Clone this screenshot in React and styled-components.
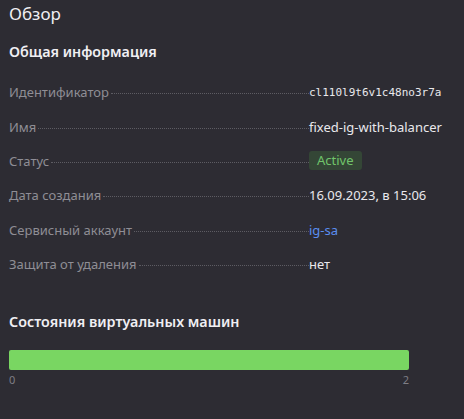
import React from 'react';
import styled, { createGlobalStyle } from 'styled-components';

const Global = createGlobalStyle`
  html, body {
    margin: 0;
    padding: 0;
    background: #2d2c33;
  }
  body {
    font-family: 'Noto Sans', 'Open Sans', sans-serif;
    color: #e9e8ec;
  }
`;

const Page = styled.div`
  width: 464px;
  height: 419px;
  box-sizing: border-box;
  padding: 3px 9px 0 9px;
  background: #2d2c33;
  overflow: hidden;
`;

const PageTitle = styled.h1`
  margin: 0;
  font-size: 17px;
  font-weight: 400;
  line-height: 22px;
  color: #f0eff3;
`;

const SectionTitle = styled.h2`
  margin: ${({ $top }) => $top}px 0 0;
  font-size: 14.3px;
  font-weight: 600;
  line-height: 20px;
  color: #f0eff3;
`;

const List = styled.div`
  display: flex;
  flex-direction: column;
  margin-top: 13px;
  width: 430px;
`;

const Row = styled.div`
  display: grid;
  grid-template-columns: 300px 1fr;
  align-items: center;
  height: 34.4px;
`;

const LabelCell = styled.div`
  display: flex;
  align-items: baseline;
  font-size: 13px;
  color: #8f8e95;
  white-space: nowrap;
`;

const Leader = styled.span`
  flex: 1;
  margin-left: 2px;
  border-bottom: 1px dotted #5d5c63;
  transform: translateY(-3px);
`;

const Value = styled.div`
  color: ${({ $link }) => ($link ? '#5a8ef0' : '#e9e8ec')};
  font-family: ${({ $mono }) => ($mono ? "'DejaVu Sans Mono', monospace" : "'Noto Sans', sans-serif")};
  font-size: ${({ $mono }) => ($mono ? '11px' : '13px')};
  white-space: nowrap;
`;

const Badge = styled.span`
  display: inline-block;
  padding: 0 8px;
  height: 19px;
  line-height: 19px;
  border-radius: 3px;
  background: #344636;
  color: #71c46b;
  font-size: 13px;
`;

const BarWrap = styled.div`
  margin-top: 18px;
  width: 400px;
`;

const Bar = styled.div`
  height: 20px;
  border-radius: 2px;
  background: #79d662;
`;

const Scale = styled.div`
  display: flex;
  justify-content: space-between;
  margin-top: 3px;
  font-size: 11px;
  line-height: 14px;
  color: #7f7e85;
`;

const rows = [
  { label: 'Идентификатор', value: 'cl110l9t6v1c48no3r7a', mono: true },
  { label: 'Имя', value: 'fixed-ig-with-balancer' },
  { label: 'Статус', badge: 'Active' },
  { label: 'Дата создания', value: '16.09.2023, в 15:06' },
  { label: 'Сервисный аккаунт', value: 'ig-sa', link: true },
  { label: 'Защита от удаления', value: 'нет' },
];

export default function App() {
  return (
    <>
      <Global />
      <Page>
        <PageTitle>Обзор</PageTitle>
        <SectionTitle $top={17}>Общая информация</SectionTitle>
        <List>
          {rows.map((r) => (
            <Row key={r.label}>
              <LabelCell>
                {r.label}
                <Leader />
              </LabelCell>
              {r.badge ? (
                <Value>
                  <Badge>{r.badge}</Badge>
                </Value>
              ) : (
                <Value $mono={r.mono} $link={r.link}>{r.value}</Value>
              )}
            </Row>
          ))}
        </List>
        <SectionTitle $top={31}>Состояния виртуальных машин</SectionTitle>
        <BarWrap>
          <Bar />
          <Scale>
            <span>0</span>
            <span>2</span>
          </Scale>
        </BarWrap>
      </Page>
    </>
  );
}
